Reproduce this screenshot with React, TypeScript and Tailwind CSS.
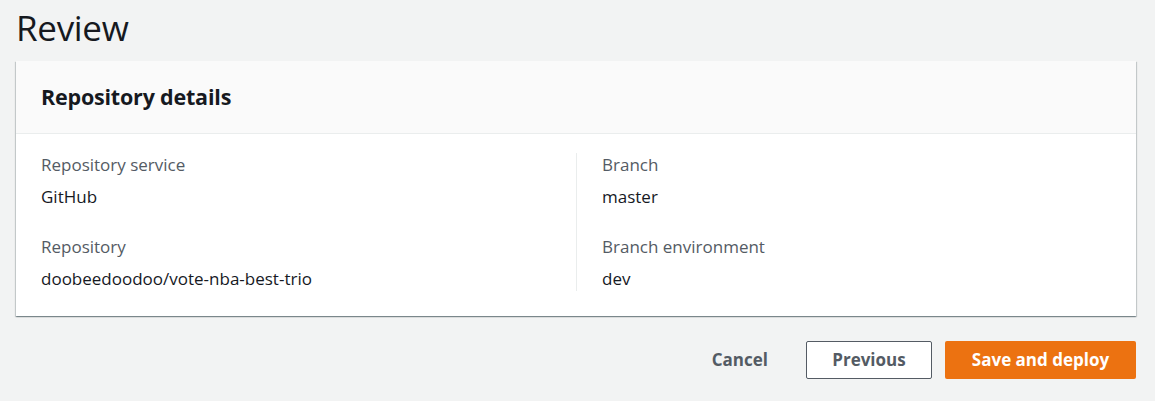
import React from 'react';

const details = [
  [
    { label: 'Repository service', value: 'GitHub' },
    { label: 'Repository', value: 'doobeedoodoo/vote-nba-best-trio' },
  ],
  [
    { label: 'Branch', value: 'master' },
    { label: 'Branch environment', value: 'dev' },
  ],
];

export default function App() {
  return (
    <div className="min-h-[401px] w-full bg-[#f2f3f3] pl-4 pr-[19px] font-['Open_Sans',sans-serif] text-[#16191f]">
      {/* Page title */}
      <h1 className="pt-[6px] text-[35px] leading-[44px] tracking-[-0.3px] text-[#16191f]">Review</h1>

      {/* Repository details card */}
      <section className="mt-[11px] bg-white shadow-[0_1px_1px_0_rgba(0,28,36,0.3),1px_1px_1px_0_rgba(0,28,36,0.15),-1px_1px_1px_0_rgba(0,28,36,0.15)]">
        <div className="flex h-[73px] items-center border-b border-[#eaeded] bg-[#fafafa] px-[25px]">
          <h2 className="text-[21.5px] font-bold tracking-[-0.2px]">Repository details</h2>
        </div>
        <div className="grid grid-cols-2 pt-[19px] pb-[25px]">
          {details.map((col, i) => (
            <div
              key={i}
              className={i === 1 ? 'flex flex-col gap-[26px] border-l border-[#eaeded] px-[25px]' : 'flex flex-col gap-[26px] px-[25px]'}
            >
              {col.map((item) => (
                <div key={item.label} className="flex flex-col gap-[8px]">
                  <span className="text-[17px] leading-[24px] text-[#545b64]">{item.label}</span>
                  <span className="text-[17px] leading-[24px] text-[#16191f]">{item.value}</span>
                </div>
              ))}
            </div>
          ))}
        </div>
      </section>

      {/* Wizard actions */}
      <div className="mt-[25px] flex items-center justify-end">
        <button className="mr-[38px] text-[17px] font-bold text-[#545b64]">Cancel</button>
        <button className="mr-[13px] h-[38px] w-[126px] rounded-[2px] border border-[#545b64] bg-white text-[17px] font-bold text-[#545b64]">
          Previous
        </button>
        <button className="h-[38px] w-[191px] rounded-[2px] bg-[#ec7211] text-[17px] font-bold text-white">
          Save and deploy
        </button>
      </div>
    </div>
  );
}
